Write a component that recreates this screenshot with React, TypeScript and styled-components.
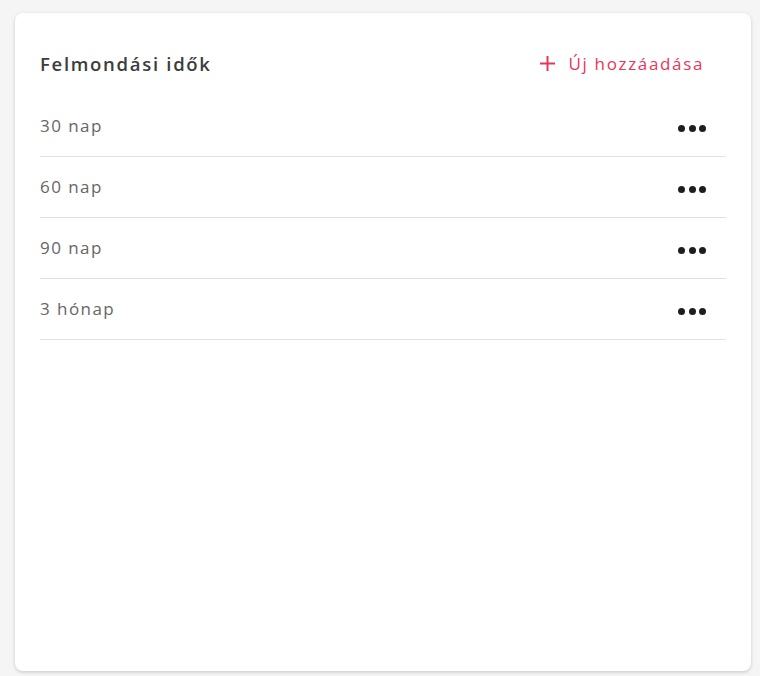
import React from 'react';
import styled, { createGlobalStyle } from 'styled-components';

const GlobalStyle = createGlobalStyle`
  html, body {
    margin: 0;
    padding: 0;
    background: #f5f5f5;
  }
  body {
    font-family: "Open Sans", "Noto Sans", sans-serif;
  }
`;

const Page = styled.div`
  width: 760px;
  height: 676px;
  box-sizing: border-box;
  padding: 13px 9px 5px 15px;
  display: flex;
`;

const Card = styled.section`
  flex: 1;
  background: #ffffff;
  border-radius: 8px;
  box-shadow: 0 1px 4px rgba(0, 0, 0, 0.12), 0 2px 3px rgba(0, 0, 0, 0.06);
  padding: 25px 25px;
  display: flex;
  flex-direction: column;
`;

const Header = styled.header`
  height: 50px;
  display: flex;
  align-items: center;
  justify-content: space-between;
  margin-bottom: 8px;
`;

const Title = styled.h2`
  margin: 0;
  font-size: 18.5px;
  font-weight: 600;
  color: #3c3c3c;
  letter-spacing: 1.7px;
`;

const AddButton = styled.button`
  display: flex;
  align-items: center;
  gap: 14px;
  border: 0;
  background: transparent;
  padding: 0;
  margin-right: 22px;
  cursor: pointer;
  color: #e8365b;
  font-family: inherit;
  font-size: 17px;
  letter-spacing: 1.65px;
`;

const List = styled.ul`
  list-style: none;
  margin: 0;
  padding: 0;
`;

const Row = styled.li`
  height: 60px;
  display: flex;
  align-items: center;
  justify-content: space-between;
  border-bottom: 1px solid #e0e0e0;
`;

const Label = styled.span`
  font-size: 17px;
  color: #666666;
  letter-spacing: 1.45px;
  margin-top: -2px;
`;

const MoreButton = styled.button`
  display: flex;
  gap: 3.5px;
  border: 0;
  background: transparent;
  padding: 0;
  margin-right: 20px;
  margin-top: 4px;
  cursor: pointer;
`;

const Dot = styled.span`
  width: 7px;
  height: 7px;
  border-radius: 50%;
  background: #1e1e1e;
`;

const PlusIcon = () => (
  <svg width="15" height="15" viewBox="0 0 15 15" aria-hidden="true">
    <path d="M7.5 0v15M0 7.5h15" stroke="#e8365b" strokeWidth="2" />
  </svg>
);

const periods = ['30 nap', '60 nap', '90 nap', '3 hónap'];

export default function App() {
  return (
    <>
      <GlobalStyle />
      <Page>
        <Card>
          <Header>
            <Title>Felmondási idők</Title>
            <AddButton type="button">
              <PlusIcon />
              Új hozzáadása
            </AddButton>
          </Header>
          <List>
            {periods.map((p) => (
              <Row key={p}>
                <Label>{p}</Label>
                <MoreButton type="button" aria-label="Műveletek">
                  <Dot />
                  <Dot />
                  <Dot />
                </MoreButton>
              </Row>
            ))}
          </List>
        </Card>
      </Page>
    </>
  );
}
